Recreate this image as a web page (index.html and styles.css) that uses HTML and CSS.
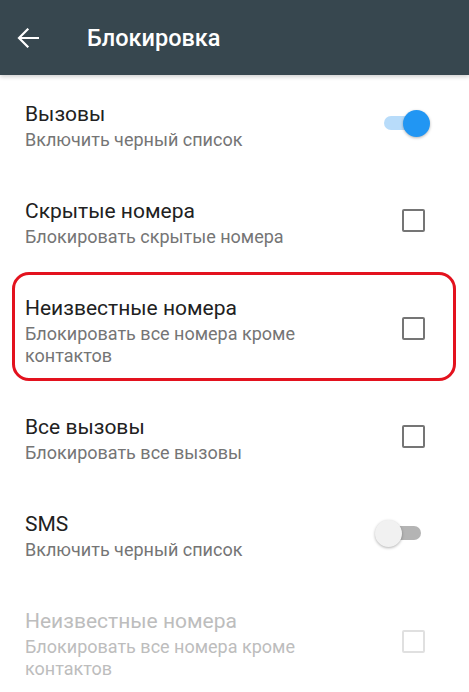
FILE: index.html
```html
<!DOCTYPE html>
<html lang="ru">
<head>
<meta charset="utf-8">
<title>Блокировка</title>
<link rel="stylesheet" href="styles.css">
</head>
<body>
<header class="appbar">
  <svg class="back" width="22" height="20" viewBox="0 0 22 20" aria-hidden="true">
    <path d="M21 10H2.5M10.5 1.5L2 10l8.5 8.5" fill="none" stroke="#fff" stroke-width="2.2" stroke-linecap="square"/>
  </svg>
  <h1 class="title">Блокировка</h1>
</header>
<main class="list">
  <div class="row">
    <div class="text">
      <div class="primary">Вызовы</div>
      <div class="secondary">Включить черный список</div>
    </div>
    <span class="switch on"><span class="thumb"></span></span>
  </div>
  <div class="row">
    <div class="text">
      <div class="primary">Скрытые номера</div>
      <div class="secondary">Блокировать скрытые номера</div>
    </div>
    <span class="checkbox"></span>
  </div>
  <div class="row highlighted">
    <div class="text">
      <div class="primary">Неизвестные номера</div>
      <div class="secondary">Блокировать все номера кроме контактов</div>
    </div>
    <span class="checkbox"></span>
  </div>
  <div class="row">
    <div class="text">
      <div class="primary">Все вызовы</div>
      <div class="secondary">Блокировать все вызовы</div>
    </div>
    <span class="checkbox"></span>
  </div>
  <div class="row">
    <div class="text">
      <div class="primary">SMS</div>
      <div class="secondary">Включить черный список</div>
    </div>
    <span class="switch off"><span class="thumb"></span></span>
  </div>
  <div class="row disabled">
    <div class="text">
      <div class="primary">Неизвестные номера</div>
      <div class="secondary">Блокировать все номера кроме контактов</div>
    </div>
    <span class="checkbox"></span>
  </div>
</main>
</body>
</html>
```

FILE: styles.css
```css
html, body {
  margin: 0;
  padding: 0;
  background: #fff;
  font-family: Roboto, "Noto Sans", "Liberation Sans", sans-serif;
  overflow: hidden;
}

.appbar {
  height: 75px;
  background: #37474f;
  display: flex;
  align-items: center;
  box-shadow: 0 2px 4px rgba(0, 0, 0, 0.18);
  position: relative;
  z-index: 1;
}

.back {
  margin-left: 17px;
  margin-top: 1px;
}

.title {
  margin: 0 0 0 48px;
  color: #fff;
  font-size: 23.5px;
  font-weight: 500;
  line-height: 28px;
}

.list {
  display: flex;
  flex-direction: column;
}

.row {
  position: relative;
  display: flex;
  align-items: center;
  padding: 26px 0 21px 25px;
}

.text {
  flex: 1;
  min-width: 0;
  padding-right: 40px;
}

.primary {
  font-size: 21px;
  line-height: 26px;
  color: #212121;
}

.secondary {
  margin-top: 2px;
  font-size: 18px;
  line-height: 22px;
  color: #757575;
  max-width: 310px;
}

.checkbox {
  flex: none;
  width: 19px;
  height: 19px;
  border: 2.5px solid #757575;
  border-radius: 2px;
  margin-right: 44px;
  margin-bottom: 5px;
}

.switch {
  flex: none;
  position: relative;
  width: 37px;
  height: 14px;
  border-radius: 7px;
  margin-right: 48px;
  margin-bottom: 6px;
}

.switch .thumb {
  position: absolute;
  top: -6.5px;
  width: 27px;
  height: 27px;
  border-radius: 50%;
  box-shadow: 0 1px 3px rgba(0, 0, 0, 0.3);
}

.switch.on {
  background: #b8dcfa;
}

.switch.on .thumb {
  right: -9px;
  background: #2196f3;
}

.switch.off {
  background: #b4b4b4;
}

.switch.off .thumb {
  left: -9px;
  background: #f1f1f1;
}

.highlighted::after {
  content: "";
  position: absolute;
  left: 12px;
  right: 13px;
  top: 3px;
  bottom: 7px;
  border: 3.5px solid #e3121e;
  border-radius: 17px;
  pointer-events: none;
}

.disabled .primary,
.disabled .secondary {
  color: #bdbdbd;
}

.disabled .checkbox {
  border-color: #e0e0e0;
}
```
